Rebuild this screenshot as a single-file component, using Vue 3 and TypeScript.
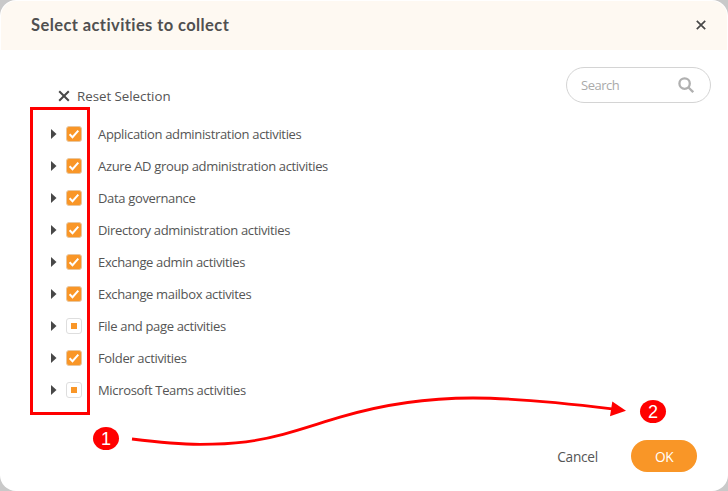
<script setup lang="ts">
import { ref } from 'vue'

interface Activity {
  label: string
  state: 'checked' | 'partial'
}

const search = ref('')
const activities = ref<Activity[]>([
  { label: 'Application administration activities', state: 'checked' },
  { label: 'Azure AD group administration activities', state: 'checked' },
  { label: 'Data governance', state: 'checked' },
  { label: 'Directory administration activities', state: 'checked' },
  { label: 'Exchange admin activities', state: 'checked' },
  { label: 'Exchange mailbox activites', state: 'checked' },
  { label: 'File and page activities', state: 'partial' },
  { label: 'Folder activities', state: 'checked' },
  { label: 'Microsoft Teams activities', state: 'partial' },
])

function toggle(item: Activity) {
  item.state = item.state === 'checked' ? 'partial' : 'checked'
}
</script>

<template>
  <div class="dialog">
    <header class="header">
      <h1 class="title">Select activities to collect</h1>
      <button class="close">
        <svg width="10" height="10" viewBox="0 0 10 10"><path d="M.8 .8 9.2 9.2M9.2 .8 .8 9.2" /></svg>
      </button>
    </header>

    <main class="body">
      <section class="picker">
        <button class="reset">
          <svg width="12" height="12" viewBox="0 0 12 12"><path d="M1.2 1.2 10.8 10.8M10.8 1.2 1.2 10.8" /></svg>
          <span>Reset Selection</span>
        </button>
        <ul class="tree">
          <li v-for="item in activities" :key="item.label" class="row">
            <svg class="caret" width="7" height="10" viewBox="0 0 7 10"><path d="M1 0 6.500 5 1 10Z" /></svg>
            <span class="box" :class="item.state" @click="toggle(item)">
              <svg v-if="item.state === 'checked'" width="14" height="14" viewBox="0 0 14 14"><path d="M2.6 7.3 5.5 10.2 11.3 3.7" /></svg>
              <i v-else class="dot"></i>
            </span>
            <span class="label">{{ item.label }}</span>
          </li>
        </ul>
      </section>

      <label class="search">
        <input v-model="search" type="text" placeholder="Search" />
        <svg width="16" height="16" viewBox="0 0 16 16"><circle cx="6.6" cy="6.6" r="5.2" /><path d="M10.5 10.5 15.2 15.2" /></svg>
      </label>
    </main>

    <footer class="footer">
      <button class="cancel">Cancel</button>
      <button class="ok">OK</button>
    </footer>

    <div class="highlight"></div>
    <svg class="arrow" width="728" height="491" viewBox="0 0 728 491">
      <path class="line" d="M132 439C156 442 178 444.300 200 444.300C216 444.300 231 443.700 246 441.800C280 437.500 310 426 340 417.200C384 404 426 398 473 398C510 398 548 401 612 408.800" />
      <path class="tip" d="M612.300 401.500 626 410.800 610 416.300Z" />
    </svg>
    <span class="step one">1</span>
    <span class="step two">2</span>
  </div>
</template>

<style>
body {
  background: #c9c9c9;
}
</style>

<style scoped>
.dialog {
  position: relative;
  box-sizing: border-box;
  display: flex;
  flex-direction: column;
  width: 728px;
  height: 491px;
  padding: 1px 1px 0;
  border-radius: 16px;
  overflow: hidden;
  background: #fff;
  color: #555;
  font-family: "Open Sans", "Noto Sans", sans-serif;
}
button {
  display: flex;
  align-items: center;
  padding: 0;
  border: 0;
  background: none;
  color: inherit;
  font: inherit;
}
.header {
  display: flex;
  align-items: center;
  justify-content: space-between;
  height: 49px;
  padding: 0 21px 0 30px;
  box-sizing: border-box;
  border-radius: 15px 15px 0 0;
  background: #fef9f2;
}
.title {
  margin: 0;
  padding-bottom: 1px;
  color: #505050;
  font: 700 16.5px/22px Lato, sans-serif;
  letter-spacing: 0.41px;
}
.close {
  padding-bottom: 2px;
}
.close svg {
  fill: none;
  stroke: #484848;
  stroke-width: 1.7;
}
.body {
  display: flex;
  justify-content: space-between;
  align-items: flex-start;
  padding: 17px 16px 0 49px;
}
.picker {
  padding-top: 19px;
}
.reset {
  gap: 7px;
  height: 20px;
  margin-left: 8px;
  font-size: 13.3px;
  letter-spacing: -0.02px;
}
.reset svg {
  fill: none;
  stroke: #484848;
  stroke-width: 2;
}
.tree {
  margin: 12px 0 0;
  padding: 0;
  list-style: none;
}
.row {
  display: flex;
  align-items: center;
  height: 32px;
}
.caret {
  fill: #484848;
}
.box {
  display: flex;
  align-items: center;
  justify-content: center;
  box-sizing: border-box;
  width: 16px;
  height: 16px;
  margin: 0 16px 0 9px;
  border: 1px solid #dedede;
  border-radius: 3px;
  background: #fff;
}
.box.checked {
  border-color: #eac79e;
  background: #f99627;
}
.box svg {
  flex: none;
  fill: none;
  stroke: #fff;
  stroke-width: 2;
}
.dot {
  width: 6px;
  height: 6px;
  background: #f99627;
}
.label {
  font-size: 13px;
  letter-spacing: -0.34px;
  white-space: nowrap;
}
.search {
  display: flex;
  align-items: center;
  justify-content: space-between;
  box-sizing: border-box;
  width: 145px;
  height: 36px;
  padding: 0 16px 0 14px;
  border: 1px solid #d4d4d4;
  border-radius: 18px;
}
.search input {
  width: 80px;
  padding: 0;
  border: 0;
  outline: 0;
  background: none;
  font: 13px "Open Sans", sans-serif;
  letter-spacing: -0.5px;
}
.search input::placeholder {
  color: #aaa;
}
.search svg {
  fill: none;
  stroke: #b0b0b0;
  stroke-width: 2.3;
}
.footer {
  display: flex;
  align-items: center;
  justify-content: flex-end;
  gap: 33px;
  margin-top: auto;
  padding: 0 30px 19px 0;
  font-size: 13.7px;
}
.cancel {
  letter-spacing: -0.25px;
}
.ok {
  justify-content: center;
  width: 66px;
  height: 32px;
  border-radius: 16px;
  background: #f99627;
  color: #fff;
  font-weight: 500;
  letter-spacing: -0.5px;
}
.highlight {
  position: absolute;
  left: 30px;
  top: 107px;
  box-sizing: border-box;
  width: 60px;
  height: 308px;
  border: 3px solid #f00;
  pointer-events: none;
}
.arrow {
  position: absolute;
  left: 0;
  top: 0;
  pointer-events: none;
}
.line {
  fill: none;
  stroke: #f00;
  stroke-width: 2.8;
}
.tip {
  fill: #f00;
}
.step {
  position: absolute;
  width: 26px;
  height: 23px;
  border-radius: 50%;
  background: #f00;
  color: #fff;
  font: 18px/25px "Liberation Sans", sans-serif;
  text-align: center;
}
.one {
  left: 93px;
  top: 427px;
}
.two {
  left: 640px;
  top: 400px;
}
</style>
